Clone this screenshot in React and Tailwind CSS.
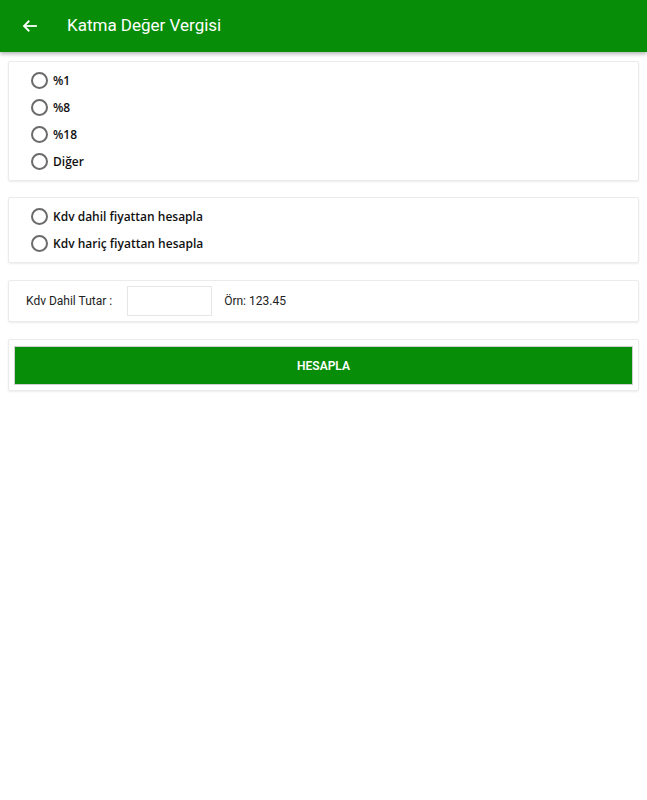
import React from "react";

function Radio({ label }) {
  return (
    <div className="flex items-center h-[27px]">
      <span className="w-[17px] h-[17px] rounded-full border-2 border-[#6b6b6b] box-border"></span>
      <span className="ml-[5px] text-[12px] font-semibold text-[#111]" style={{ fontFamily: '"Open Sans", "Noto Sans", sans-serif' }}>{label}</span>
    </div>
  );
}

export default function App() {
  return (
    <div className="w-[647px] h-[800px] bg-white relative" style={{ fontFamily: 'Roboto, "Noto Sans", sans-serif' }}>
      <div className="h-[52px] bg-[#078d07] flex items-center shadow-[0_2px_4px_rgba(0,0,0,0.3)] relative z-10">
        <svg className="ml-[21px]" width="18" height="18" viewBox="0 0 24 24" fill="none" stroke="white" strokeWidth="2.4" strokeLinecap="square">
          <path d="M20 12H5" />
          <path d="M11 5l-7 7 7 7" strokeLinecap="butt" />
        </svg>
        <span className="ml-[28px] text-white text-[17px]">Katma Değer Vergisi</span>
      </div>
      <div className="px-[8px] pt-[9px] flex flex-col">
        <div className="border border-[#ebebeb] rounded-[2px] shadow-[0_1px_2px_rgba(0,0,0,0.08)] pl-[22px] pt-[5px] pb-[5px]">
          <Radio label="%1" />
          <Radio label="%8" />
          <Radio label="%18" />
          <Radio label="Diğer" />
        </div>
        <div className="mt-[16px] border border-[#ebebeb] rounded-[2px] shadow-[0_1px_2px_rgba(0,0,0,0.08)] pl-[22px] pt-[5px] pb-[5px]">
          <Radio label="Kdv dahil fiyattan hesapla" />
          <Radio label="Kdv hariç fiyattan hesapla" />
        </div>
        <div className="mt-[17px] h-[42px] border border-[#ebebeb] rounded-[2px] shadow-[0_1px_2px_rgba(0,0,0,0.08)] flex items-center pl-[17px]">
          <span className="text-[12px] text-[#222]">Kdv Dahil Tutar :</span>
          <div className="ml-[15px] w-[85px] h-[30px] border border-[#e6e6e6]"></div>
          <span className="ml-[12px] text-[12px] text-[#222]">Örn: 123.45</span>
        </div>
        <div className="mt-[17px] border border-[#ebebeb] rounded-[2px] shadow-[0_1px_2px_rgba(0,0,0,0.08)] px-[5px] pt-[6px] pb-[5px]">
          <div className="h-[39px] bg-[#078d07] flex items-center justify-center text-white text-[12px] font-semibold border border-[#d0d0d0]">HESAPLA</div>
        </div>
      </div>
    </div>
  );
}
